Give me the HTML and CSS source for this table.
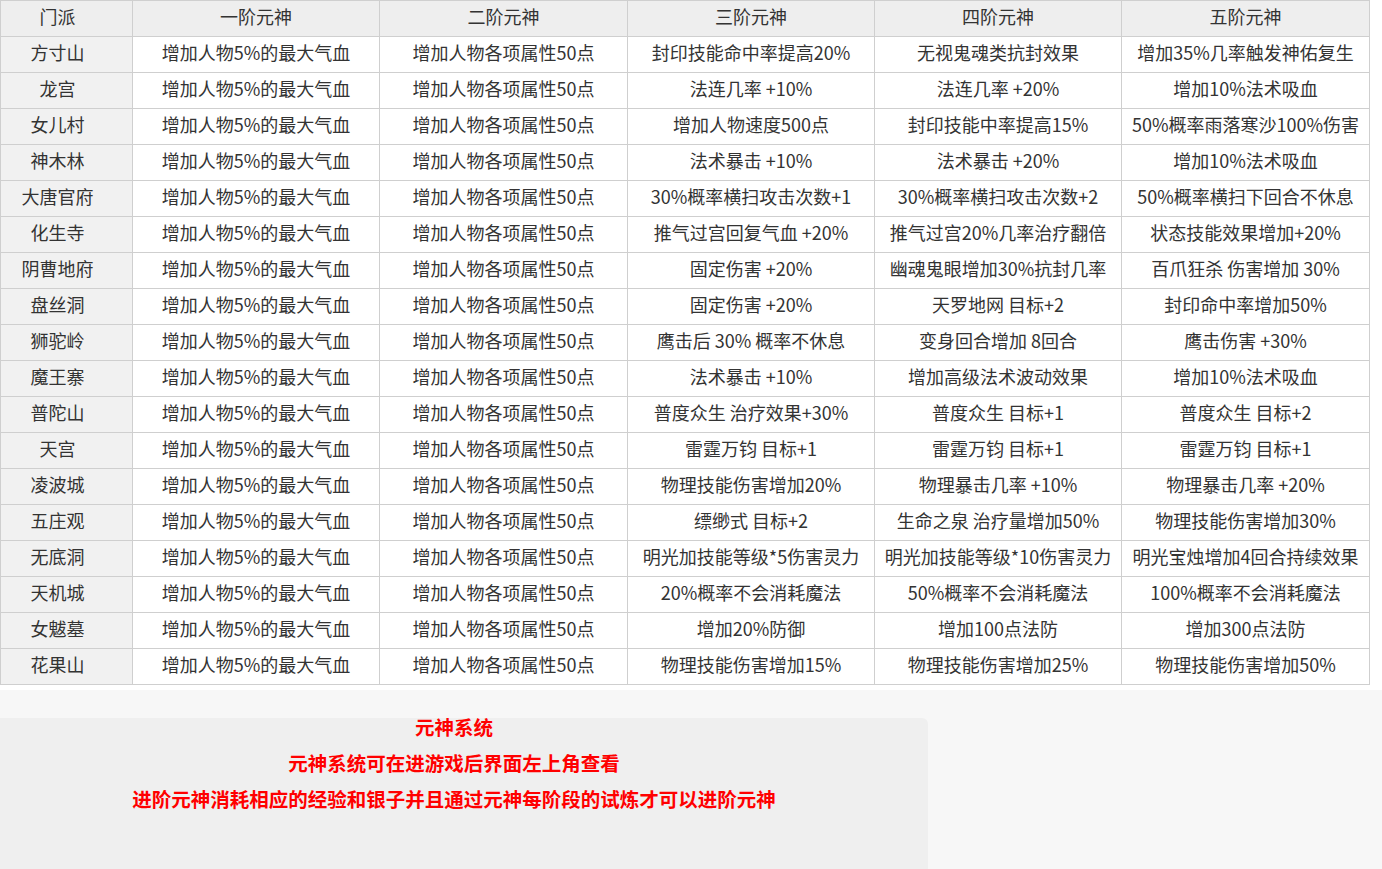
FILE: index.html
```html
<!DOCTYPE html>
<html lang="zh-CN">
<head>
<meta charset="utf-8">
<title>元神系统</title>
<link rel="stylesheet" href="styles.css">
</head>
<body>
<div class="page">
  <section class="top">
    <table class="yuanshen">
      <colgroup>
        <col class="c0"><col class="c1"><col class="c2"><col class="c1"><col class="c1"><col class="c2">
      </colgroup>
      <thead>
        <tr><th class="sect">门派</th><th>一阶元神</th><th>二阶元神</th><th>三阶元神</th><th>四阶元神</th><th>五阶元神</th></tr>
      </thead>
      <tbody>
        <tr><td class="sect">方寸山</td><td>增加人物5%的最大气血</td><td>增加人物各项属性50点</td><td>封印技能命中率提高20%</td><td>无视鬼魂类抗封效果</td><td>增加35%几率触发神佑复生</td></tr>
        <tr><td class="sect">龙宫</td><td>增加人物5%的最大气血</td><td>增加人物各项属性50点</td><td>法连几率 +10%</td><td>法连几率 +20%</td><td>增加10%法术吸血</td></tr>
        <tr><td class="sect">女儿村</td><td>增加人物5%的最大气血</td><td>增加人物各项属性50点</td><td>增加人物速度500点</td><td>封印技能中率提高15%</td><td>50%概率雨落寒沙100%伤害</td></tr>
        <tr><td class="sect">神木林</td><td>增加人物5%的最大气血</td><td>增加人物各项属性50点</td><td>法术暴击 +10%</td><td>法术暴击 +20%</td><td>增加10%法术吸血</td></tr>
        <tr><td class="sect">大唐官府</td><td>增加人物5%的最大气血</td><td>增加人物各项属性50点</td><td>30%概率横扫攻击次数+1</td><td>30%概率横扫攻击次数+2</td><td>50%概率横扫下回合不休息</td></tr>
        <tr><td class="sect">化生寺</td><td>增加人物5%的最大气血</td><td>增加人物各项属性50点</td><td>推气过宫回复气血 +20%</td><td>推气过宫20%几率治疗翻倍</td><td>状态技能效果增加+20%</td></tr>
        <tr><td class="sect">阴曹地府</td><td>增加人物5%的最大气血</td><td>增加人物各项属性50点</td><td>固定伤害 +20%</td><td>幽魂鬼眼增加30%抗封几率</td><td>百爪狂杀 伤害增加 30%</td></tr>
        <tr><td class="sect">盘丝洞</td><td>增加人物5%的最大气血</td><td>增加人物各项属性50点</td><td>固定伤害 +20%</td><td>天罗地网 目标+2</td><td>封印命中率增加50%</td></tr>
        <tr><td class="sect">狮驼岭</td><td>增加人物5%的最大气血</td><td>增加人物各项属性50点</td><td>鹰击后 30% 概率不休息</td><td>变身回合增加 8回合</td><td>鹰击伤害 +30%</td></tr>
        <tr><td class="sect">魔王寨</td><td>增加人物5%的最大气血</td><td>增加人物各项属性50点</td><td>法术暴击 +10%</td><td>增加高级法术波动效果</td><td>增加10%法术吸血</td></tr>
        <tr><td class="sect">普陀山</td><td>增加人物5%的最大气血</td><td>增加人物各项属性50点</td><td>普度众生 治疗效果+30%</td><td>普度众生 目标+1</td><td>普度众生 目标+2</td></tr>
        <tr><td class="sect">天宫</td><td>增加人物5%的最大气血</td><td>增加人物各项属性50点</td><td>雷霆万钧 目标+1</td><td>雷霆万钧 目标+1</td><td>雷霆万钧 目标+1</td></tr>
        <tr><td class="sect">凌波城</td><td>增加人物5%的最大气血</td><td>增加人物各项属性50点</td><td>物理技能伤害增加20%</td><td>物理暴击几率 +10%</td><td>物理暴击几率 +20%</td></tr>
        <tr><td class="sect">五庄观</td><td>增加人物5%的最大气血</td><td>增加人物各项属性50点</td><td>缥缈式 目标+2</td><td>生命之泉 治疗量增加50%</td><td>物理技能伤害增加30%</td></tr>
        <tr><td class="sect">无底洞</td><td>增加人物5%的最大气血</td><td>增加人物各项属性50点</td><td>明光加技能等级*5伤害灵力</td><td>明光加技能等级*10伤害灵力</td><td>明光宝烛增加4回合持续效果</td></tr>
        <tr><td class="sect">天机城</td><td>增加人物5%的最大气血</td><td>增加人物各项属性50点</td><td>20%概率不会消耗魔法</td><td>50%概率不会消耗魔法</td><td>100%概率不会消耗魔法</td></tr>
        <tr><td class="sect">女魃墓</td><td>增加人物5%的最大气血</td><td>增加人物各项属性50点</td><td>增加20%防御</td><td>增加100点法防</td><td>增加300点法防</td></tr>
        <tr><td class="sect">花果山</td><td>增加人物5%的最大气血</td><td>增加人物各项属性50点</td><td>物理技能伤害增加15%</td><td>物理技能伤害增加25%</td><td>物理技能伤害增加50%</td></tr>
      </tbody>
    </table>
  </section>
  <section class="band">
    <div class="note">
      <p>元神系统</p>
      <p>元神系统可在进游戏后界面左上角查看</p>
      <p>进阶元神消耗相应的经验和银子并且通过元神每阶段的试炼才可以进阶元神</p>
    </div>
  </section>
</div>
</body>
</html>
```

FILE: styles.css
```css
html, body {
  margin: 0;
  padding: 0;
  height: 100%;
  background: #f7f7f7;
}

.page {
  min-height: 100vh;
  display: flex;
  flex-direction: column;
  font-family: "Noto Sans CJK SC", "Noto Sans", sans-serif;
}

.top {
  background: #ffffff;
  height: 690px;
}

.yuanshen {
  border-collapse: collapse;
  table-layout: fixed;
  width: 1369px;
  font-size: 18px;
  color: #333333;
}

.yuanshen col.c0 { width: 132px; }
.yuanshen col.c1 { width: 247px; }
.yuanshen col.c2 { width: 248px; }

.yuanshen th,
.yuanshen td {
  height: 29px;
  padding: 0 0 6px;
  border: 1px solid #cfcfcf;
  text-align: center;
  vertical-align: middle;
  white-space: nowrap;
  font-weight: 400;
  line-height: 20px;
}

.yuanshen th {
  background: #eeeeee;
}

.yuanshen td.sect {
  background: #f1f1f1;
}

.yuanshen .sect {
  padding-right: 18px;
}

.band {
  flex: 1;
  display: flex;
  flex-direction: column;
  padding-top: 28px;
}

.note {
  flex: 1;
  width: 928px;
  background: #efefef;
  border-top-right-radius: 6px;
  box-sizing: border-box;
  padding-right: 20px;
  text-align: center;
  color: #ff0000;
  font-weight: 700;
  font-size: 19.5px;
}

.note p {
  margin: -1px 0 17px;
  line-height: 19px;
}

.note p + p {
  margin-top: 0;
}
```
